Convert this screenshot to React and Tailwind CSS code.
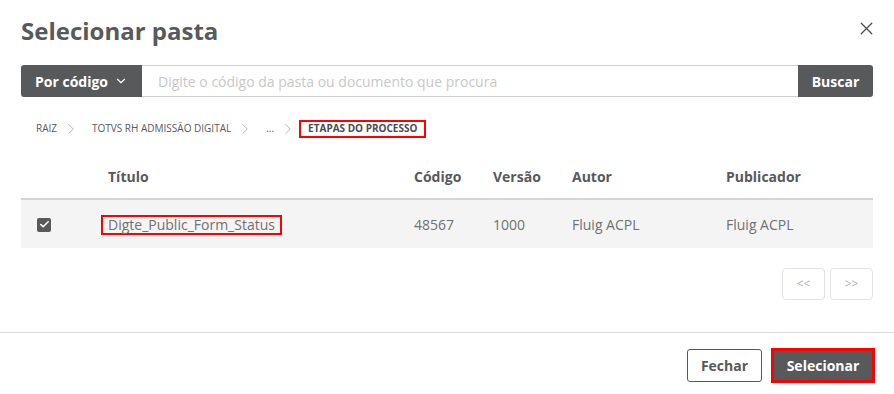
import { ChevronDown, ChevronRight, X, Check } from "lucide-react";

const crumbs = [
  { label: "RAIZ", after: "mr-[12px]" },
  { label: "TOTVS RH ADMISSÃO DIGITAL", after: "mr-[12px]" },
  { label: "...", after: "mr-[2px]" },
];

export default function App() {
  return (
    <div className="w-[894px] h-[394px] bg-white font-['Open_Sans',sans-serif] text-[#58595b] flex flex-col">
      {/* cabeçalho */}
      <div className="h-[65px] px-[21px] flex items-center justify-between">
        <h1 className="text-[24px] font-bold leading-none -mt-[4px]">Selecionar pasta</h1>
        <X size={21} strokeWidth={1.5} className="text-[#4b4c4e] -mr-[4px] -mt-[8px]" />
      </div>

      {/* busca */}
      <div className="mx-[21px] h-[32px] flex">
        <button className="w-[121px] bg-[#58595b] text-white rounded-l-[3px] flex items-center justify-center gap-[6px] text-[14px] font-bold">
          Por código
          <ChevronDown size={14} strokeWidth={2} />
        </button>
        <div className="flex-1 border-y border-[#cfcfcf] flex items-center px-4 text-[14px] text-[#c8c8c8]">
          Digite o código da pasta ou documento que procura
        </div>
        <button className="w-[75px] bg-[#58595b] text-white rounded-r-[3px] text-[14px] font-bold">Buscar</button>
      </div>

      {/* breadcrumb */}
      <div className="mt-[23px] ml-[36px] h-[17px] flex items-center text-[10px] text-[#58595b]">
        {crumbs.map((c) => (
          <span key={c.label} className="flex items-center">
            <span>{c.label}</span>
            <ChevronRight size={18} strokeWidth={1.3} className={`text-[#b5b5b5] ml-[5px] ${c.after}`} />
          </span>
        ))}
        <span className="border-2 border-[#ff0000] px-[7px] h-[18px] flex items-center font-bold text-[10px] text-[#4b4c4e]">
          ETAPAS DO PROCESSO
        </span>
      </div>

      {/* tabela */}
      <div className="mx-[21px] mt-[27px]">
        <div className="grid grid-cols-[71px_306px_79px_79px_154px_1fr] h-[36px] pt-[2px] items-start border-b-2 border-[#d4d4d4] text-[14px] font-bold">
          <div />
          <div className="pl-4">Título</div>
          <div className="pl-4">Código</div>
          <div className="pl-4">Versão</div>
          <div className="pl-4">Autor</div>
          <div className="pl-4">Publicador</div>
        </div>
        <div className="grid grid-cols-[71px_306px_79px_79px_154px_1fr] h-[48px] items-center bg-[#f4f4f4] text-[14px] text-[#707070]">
          <div className="pl-4 pt-[1px]">
            <span className="w-[14px] h-[14px] rounded-[2px] bg-[#58595b] flex items-center justify-center">
              <Check size={11} strokeWidth={3.5} className="text-white" />
            </span>
          </div>
          <div className="pl-[9px]">
            <span className="inline-block border-2 border-[#ff0000] px-[5px] leading-[16px]">Digte_Public_Form_Status</span>
          </div>
          <div className="pl-4">48567</div>
          <div className="pl-4">1000</div>
          <div className="pl-4">Fluig ACPL</div>
          <div className="pl-4">Fluig ACPL</div>
        </div>
      </div>

      {/* paginação */}
      <div className="mx-[21px] mt-[20px] flex justify-end gap-[5px]">
        <button className="w-[43px] h-[32px] border border-[#e2e2e2] rounded-[4px] text-[12px] text-[#b0b0b0]">&lt;&lt;</button>
        <button className="w-[43px] h-[32px] border border-[#e2e2e2] rounded-[4px] text-[12px] text-[#b0b0b0]">&gt;&gt;</button>
      </div>

      {/* rodapé */}
      <div className="mt-[32px] border-t border-[#dcdcdc] flex justify-end items-center gap-[9px] pr-[19px] pt-[15px]">
        <button className="w-[75px] h-[33px] border border-[#58595b] rounded-[3px] text-[14px] font-bold text-[#58595b]">Fechar</button>
        <button className="w-[104px] h-[35px] border-[3px] border-[#ff0000] bg-[#58595b] text-white text-[14px] font-bold">Selecionar</button>
      </div>
    </div>
  );
}
